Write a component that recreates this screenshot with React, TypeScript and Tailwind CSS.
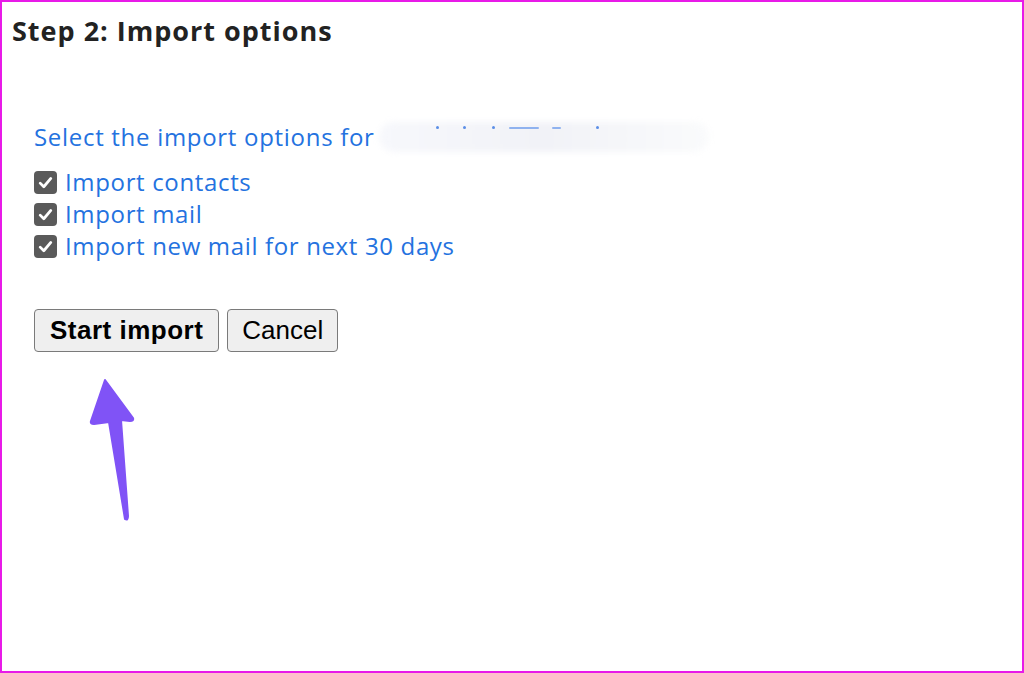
import React from "react";

function Check() {
  return (
    <span className="inline-flex items-center justify-center w-[23px] h-[23px] rounded-[4px] bg-[#5a5a5a] mr-[8px] shrink-0">
      <svg width="17" height="17" viewBox="0 0 16 16">
        <path d="M3 8.6 L6.4 12 L13 4.2" fill="none" stroke="#ffffff" strokeWidth="2.6" strokeLinecap="round" strokeLinejoin="round" />
      </svg>
    </span>
  );
}

export default function App() {
  const rows = ["Import contacts", "Import mail", "Import new mail for next 30 days"];
  return (
    <div className="relative w-[1024px] h-[673px] border-2 border-[#e81ae8] bg-white overflow-hidden">
      <h1 className="pl-[10px] pt-[12px] text-[27px] leading-[34px] font-bold tracking-[1px] text-[#222222]" style={{ fontFamily: "'Open Sans', 'Noto Sans', sans-serif" }}>
        Step 2: Import options
      </h1>
      <div className="pl-[32px] pt-[73px]" style={{ fontFamily: "'Open Sans', 'Noto Sans', sans-serif" }}>
        <div className="relative flex items-center text-[24px] leading-[32px] tracking-[0.7px] text-[#2472df]">
          <span>Select the import options for</span>
          <span className="relative ml-[4px] w-[330px] h-[30px]">
            <span className="absolute inset-0 rounded-full bg-gradient-to-r from-[#f7f8fc] via-[#f1f2f7] to-[#fafbfc] blur-[3px]"></span>
            <span className="absolute left-[57px] top-[4px] w-[3px] h-[3px] rounded-full bg-[#5b8ee6]"></span>
            <span className="absolute left-[84px] top-[4px] w-[3px] h-[3px] rounded-full bg-[#5b8ee6]"></span>
            <span className="absolute left-[113px] top-[4px] w-[3px] h-[3px] rounded-full bg-[#5b8ee6]"></span>
            <span className="absolute left-[130px] top-[5px] w-[30px] h-[2px] rounded-full bg-[#8fb2ef]"></span>
            <span className="absolute left-[173px] top-[5px] w-[9px] h-[2px] rounded-full bg-[#8fb2ef]"></span>
            <span className="absolute left-[217px] top-[4px] w-[3px] h-[3px] rounded-full bg-[#5b8ee6]"></span>
          </span>
        </div>
        <div className="mt-[13px] flex flex-col">
          {rows.map((r) => (
            <label key={r} className="flex items-center h-[32px] text-[24px] tracking-[0.65px] text-[#2472df]">
              <Check />
              <span>{r}</span>
            </label>
          ))}
        </div>
        <div className="mt-[47px] flex gap-[8px]" style={{ fontFamily: "'Liberation Sans', Arial, sans-serif" }}>
          <button className="h-[43px] px-[15px] rounded-[4px] border-[1.5px] border-[#7a7a7a] bg-[#efefef] text-[26px] tracking-[0.5px] font-bold text-black">
            Start import
          </button>
          <button className="h-[43px] px-[14px] rounded-[4px] border-[1.5px] border-[#7a7a7a] bg-[#efefef] text-[26px] text-black">
            Cancel
          </button>
        </div>
      </div>
      <svg className="absolute left-0 top-0" width="1024" height="673" viewBox="0 0 1024 673">
        <path
          d="M103 378 L131 416 Q132 419 128 419 L119 418 L126 514 Q126 519 123 517 L107 420 L92 422 Q88 422 89 419 Z"
          fill="#8053f6"
          stroke="#8053f6"
          strokeWidth="2"
          strokeLinejoin="round"
        />
      </svg>
    </div>
  );
}
